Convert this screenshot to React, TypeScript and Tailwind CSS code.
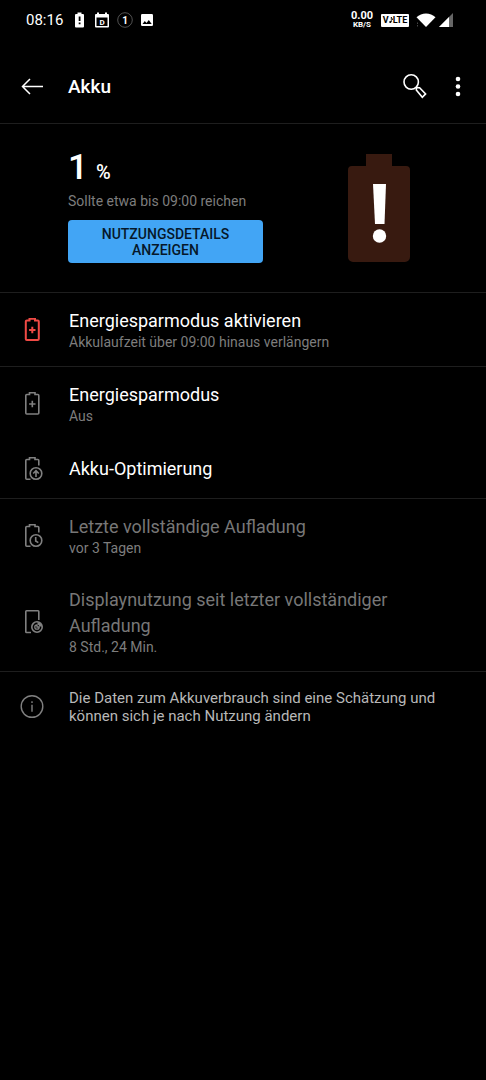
import type { ReactNode } from 'react'

function StatusBar() {
  return (
    <div className="flex h-10 items-center justify-between pl-[26px] pr-[33px] text-white">
      <div className="flex items-center">
        <span className="text-[15px] leading-5">08:16</span>
        <svg className="ml-3 h-4 w-[9px]" viewBox="0 0 9 16" aria-hidden="true">
          <path d="M2.5 0.5h4v1.5H8a1 1 0 0 1 1 1v11.5a1 1 0 0 1-1 1H1a1 1 0 0 1-1-1V3a1 1 0 0 1 1-1h1.5z" fill="#fff" />
          <path d="M3.7 4.5h1.8v4.5H3.7zM3.7 10.5h1.8v1.8H3.7z" fill="#000" />
        </svg>
        <svg className="ml-[11px] h-4 w-3.5" viewBox="0 0 14 16" aria-hidden="true">
          <path d="M2 0.5h2v1.5h6V.5h2v1.5h1a1 1 0 0 1 1 1v11.5a1 1 0 0 1-1 1H1a1 1 0 0 1-1-1V3a1 1 0 0 1 1-1h1z" fill="#fff" />
          <path d="M1.5 5.5h11v8.5h-11z" fill="#000" />
          <text x="7" y="12.5" textAnchor="middle" fontSize="8" fontWeight="700" fill="#fff">D</text>
        </svg>
        <svg className="ml-2 h-4 w-4" viewBox="0 0 16 16" aria-hidden="true">
          <circle cx="8" cy="8" r="7.3" fill="none" stroke="#666" strokeWidth="0.8" />
          <text x="8" y="11.5" textAnchor="middle" fontSize="10" fontWeight="700" fill="#fff">1</text>
        </svg>
        <svg className="ml-2 h-3 w-3" viewBox="0 0 12 12" aria-hidden="true">
          <rect width="12" height="12" rx="1.2" fill="#fff" />
          <path d="M1.5 10l2.3-3 1.7 2 2.3-3 2.9 4z" fill="#000" />
        </svg>
      </div>
      <div className="flex items-center">
        <div className="flex flex-col items-center font-bold">
          <span className="text-[11px] leading-[9px]">0.00</span>
          <span className="text-[8px] leading-[9px]">KB/S</span>
        </div>
        <div className="ml-2 flex h-[13px] w-7 items-center justify-center rounded-[1px] bg-white text-[9px] leading-none font-bold text-black">
          <span>V</span>
          <svg className="h-2 w-1" viewBox="0 0 4 8" aria-hidden="true">
            <circle cx="1.3" cy="6" r="1.1" fill="#000" />
            <path d="M2.3 6V1c.2 1.3 1.3 1.2 1.3 3" fill="none" stroke="#000" strokeWidth="0.8" />
          </svg>
          <span>LTE</span>
        </div>
        <svg className="ml-[7px] h-3.5 w-5" viewBox="0 0 20 14" aria-hidden="true">
          <path d="M10 14L.5 4.3C5.5-.8 14.5-.8 19.5 4.3z" fill="#fff" />
          <path d="M1.5 9.5v1.5M1.5 12v1.5" stroke="#444" />
        </svg>
        <svg className="ml-[3px] h-3.5 w-3.5" viewBox="0 0 14 14" aria-hidden="true">
          <path d="M14 0v14H0z" fill="#666" />
          <path d="M10 4v10H0z" fill="#fff" />
        </svg>
      </div>
    </div>
  )
}

function AppBar() {
  return (
    <header className="flex h-[84px] items-center border-b border-[#1e1e1e] pt-2.5 pr-[18px] pl-5 text-white">
      <button type="button" aria-label="Zurück" className="h-6 w-6">
        <svg viewBox="0 0 24 24" fill="none" stroke="currentColor" strokeWidth="1.5">
          <path d="M23 11.5H2.5M10 4L2.5 11.5l7.5 7.5" />
        </svg>
      </button>
      <h1 className="ml-6 flex-1 text-[19px] leading-6 font-medium">Akku</h1>
      <button type="button" aria-label="Suchen" className="h-6 w-6">
        <svg className="overflow-visible" viewBox="0 0 24 24" fill="none" stroke="currentColor" strokeWidth="1.6">
          <circle cx="9.2" cy="7" r="7.2" />
          <path d="M14.3 12.2l1.2 1.2M14.3 15l.3-2.5 3 .3 6 6.1-3.3 3.4z" />
        </svg>
      </button>
      <button type="button" aria-label="Weitere Optionen" className="ml-[18px] h-6 w-6">
        <svg viewBox="0 0 24 24" fill="currentColor">
          <circle cx="14" cy="4" r="2.3" />
          <circle cx="14" cy="11.5" r="2.3" />
          <circle cx="14" cy="19" r="2.3" />
        </svg>
      </button>
    </header>
  )
}

function Summary() {
  return (
    <section className="flex items-start justify-between border-b border-[#1e1e1e] pt-[30px] pr-[76px] pb-[29px] pl-[68px]">
      <div className="w-[195px]">
        <p className="flex items-baseline gap-2 leading-7 font-medium text-white">
          <span className="text-[35px]">1</span>
          <span className="text-[20px]">%</span>
        </p>
        <p className="mt-1.5 text-[14px] leading-[18px] whitespace-nowrap text-[#7d7d7d]">Sollte etwa bis 09:00 reichen</p>
        <button type="button" className="mt-2.5 w-full rounded bg-[#42a5f5] px-6 pt-[6px] pb-[5px] text-[14px] leading-4 font-medium text-[#06182a]">
          NUTZUNGSDETAILS ANZEIGEN
        </button>
      </div>
      <svg className="h-[108px] w-[62px]" viewBox="0 0 62 108" aria-hidden="true">
        <path d="M18 0h26v12h14a4 4 0 0 1 4 4v87a5 5 0 0 1-5 5H5a5 5 0 0 1-5-5V16a4 4 0 0 1 4-4h14z" fill="#381a10" />
        <path d="M25 30h13l-1.5 40h-9.5z" fill="#fff" />
        <circle cx="31.5" cy="82" r="6.7" fill="#fff" />
      </svg>
    </section>
  )
}

function BatteryPlusIcon({ bold = false }: { bold?: boolean }) {
  return (
    <svg viewBox="0 0 24 24" fill="none" stroke="currentColor" strokeWidth={bold ? 2 : 1.6}>
      <path d="M9.5 2.5V.8h5.5V2.5h2.8a1 1 0 0 1 1 1v17.5a1 1 0 0 1-1 1h-11a1 1 0 0 1-1-1V3.5a1 1 0 0 1 1-1z" />
      <path d="M12.3 8.8v6.4M9.1 12h6.4" />
    </svg>
  )
}

function BatteryBadgeIcon({ children }: { children: ReactNode }) {
  return (
    <svg viewBox="0 0 24 24" fill="none" stroke="currentColor" strokeWidth="1.6">
      <path d="M10.5 22.2H6.8a1 1 0 0 1-1-1V3.5a1 1 0 0 1 1-1h2.7V.8h5.5v1.7h2.8a1 1 0 0 1 1 1v5" />
      <circle cx="16" cy="16.5" r="5.8" />
      {children}
    </svg>
  )
}

function ScreenUsageIcon() {
  return (
    <svg viewBox="0 0 24 24" fill="none" stroke="currentColor" strokeWidth="1.6">
      <path d="M11 22.5H6.5a.7.7 0 0 1-.7-.7V1.5a.7.7 0 0 1 .7-.7h11.6a.7.7 0 0 1 .7.7V10" />
      <circle cx="17" cy="17" r="5.2" />
      <path d="M17 14.8a2.2 2.2 0 1 0 2.2 2.2h-2.2z" strokeWidth="1.3" />
      <path d="M17.5 12a5 5 0 0 1 4.5 4.5h-2.5a2.5 2.5 0 0 0-2-2z" fill="currentColor" stroke="none" />
    </svg>
  )
}

function InfoIcon() {
  return (
    <svg viewBox="0 0 24 24" fill="none" stroke="currentColor" strokeWidth="1.4">
      <circle cx="12" cy="11.5" r="10.8" />
      <path d="M12 9.7v7M12 6.3v1.7" />
    </svg>
  )
}

type RowProps = {
  icon: ReactNode
  title: string
  subtitle?: string
  red?: boolean
  disabled?: boolean
  divider?: boolean
}

function Row({ icon, title, subtitle, red, disabled, divider }: RowProps) {
  return (
    <li className={divider ? 'border-b border-[#1e1e1e]' : ''}>
      <button
        type="button"
        disabled={disabled}
        className="flex min-h-[58px] w-full items-center gap-[25px] py-[15px] pr-6 pl-5 text-left"
      >
        <span className={`h-6 w-6 shrink-0 ${red ? 'text-[#f04a45]' : 'text-[#808080]'}`}>{icon}</span>
        <span className="flex-1">
          <span className={`block text-[18px] leading-[26px] ${disabled ? 'text-[#777777]' : 'text-white'}`}>{title}</span>
          {subtitle && <span className="block text-[14px] leading-[17px] text-[#7d7d7d]">{subtitle}</span>}
        </span>
      </button>
    </li>
  )
}

export default function App() {
  return (
    <div className="min-h-screen bg-black font-['Roboto',sans-serif]">
      <StatusBar />
      <AppBar />
      <main>
        <Summary />
        <ul>
          <Row
            icon={<BatteryPlusIcon bold />}
            title="Energiesparmodus aktivieren"
            subtitle="Akkulaufzeit über 09:00 hinaus verlängern"
            red
            divider
          />
          <Row icon={<BatteryPlusIcon />} title="Energiesparmodus" subtitle="Aus" />
          <Row
            icon={
              <BatteryBadgeIcon>
                <path d="M16 20v-6M13.2 16.5l2.8-2.8 2.8 2.8" />
              </BatteryBadgeIcon>
            }
            title="Akku-Optimierung"
            divider
          />
          <Row
            icon={
              <BatteryBadgeIcon>
                <path d="M15.7 13v4l2.6 1.7" />
              </BatteryBadgeIcon>
            }
            title="Letzte vollständige Aufladung"
            subtitle="vor 3 Tagen"
            disabled
          />
          <Row
            icon={<ScreenUsageIcon />}
            title="Displaynutzung seit letzter vollständiger Aufladung"
            subtitle="8 Std., 24 Min."
            disabled
            divider
          />
        </ul>
        <div className="flex items-center gap-[25px] py-[17px] pr-10 pl-5">
          <span className="h-6 w-6 shrink-0 text-[#808080]">
            <InfoIcon />
          </span>
          <p className="flex-1 text-[15px] leading-[18px] text-[#b8b8b8]">
            Die Daten zum Akkuverbrauch sind eine Schätzung und können sich je nach Nutzung ändern
          </p>
        </div>
      </main>
    </div>
  )
}
